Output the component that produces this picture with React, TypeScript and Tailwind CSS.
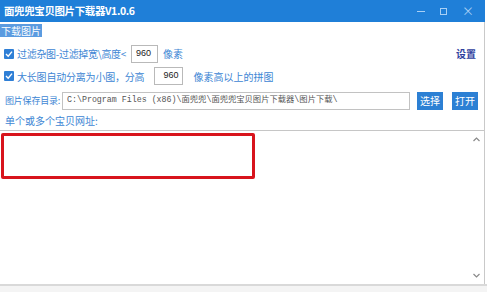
import React from 'react';

const cjk = "'Noto Sans CJK SC', 'Liberation Sans', sans-serif";

function Check() {
  return (
    <span className="w-[10px] h-[10px] bg-[#2f7fd6] rounded-[1px] flex items-center justify-center shrink-0">
      <svg width="8" height="8" viewBox="0 0 8 8">
        <path d="M1 4 L3.2 6.2 L7 1.6" stroke="#fff" strokeWidth="1.4" fill="none" />
      </svg>
    </span>
  );
}

function NumBox({ value, className }: { value: string; className: string }) {
  return (
    <div
      className={`h-[18px] border border-[#b9b9b9] bg-white flex items-center pl-[4px] text-[9px] text-[#222] ${className}`}
      style={{ fontFamily: "'Liberation Sans', sans-serif" }}
    >
      {value}
    </div>
  );
}

export default function App() {
  return (
    <div className="w-[487px] h-[292px] bg-white overflow-hidden flex flex-col" style={{ fontFamily: cjk }}>
      {/* Title bar */}
      <div className="h-[22px] w-[485px] bg-[#1f7fd8] flex items-center justify-between pl-[4px] pr-[11px] shrink-0">
        <span className="text-white text-[10.5px] font-bold leading-none tracking-[-0.4px]">面兜兜宝贝图片下载器V1.0.6</span>
        <div className="flex items-center gap-[15px] text-[#a9d0f5] text-[11px] leading-none">
          <span className="w-[8px] h-[1px] bg-[#a9d0f5]" />
          <span className="w-[7px] h-[7px] border border-[#a9d0f5]" />
          <span className="text-[12px]">×</span>
        </div>
      </div>

      <div className="flex-1 w-[485px] border-r border-[#c9c9c9] flex flex-col">
        {/* Tab */}
        <div className="mt-[2px] w-fit bg-[#5b9be0] text-white text-[10px] leading-[13px] px-[1px]">下载图片</div>

        {/* Row 1 */}
        <div className="flex items-center mt-[7px] pl-[4px] pr-[8px] h-[19px]">
          <Check />
          <span className="ml-[3px] text-[10px] text-[#3d86d4] tracking-[-0.3px]">过滤杂图-过滤掉宽\高度&lt;</span>
          <NumBox value="960" className="w-[27px] ml-[5px]" />
          <span className="ml-[5px] text-[10px] text-[#3d86d4]">像素</span>
          <span className="ml-auto text-[10px] text-[#2f3f9e] font-bold">设置</span>
        </div>

        {/* Row 2 */}
        <div className="flex items-center mt-[4px] pl-[4px] h-[18px]">
          <Check />
          <span className="ml-[3px] text-[10px] text-[#3d86d4] tracking-[-0.2px]">大长图自动分离为小图，分高</span>
          <NumBox value="960" className="w-[29px] ml-[10px] justify-center pl-0" />
          <span className="ml-[10px] text-[10px] text-[#3d86d4]">像素高以上的拼图</span>
        </div>

        {/* Row 3 */}
        <div className="flex items-center mt-[6px] pl-[5px] h-[19px]">
          <span className="text-[9px] text-[#3d86d4] w-[57px] whitespace-nowrap tracking-[-0.2px]">图片保存目录:</span>
          <div
            className="w-[348px] h-[18px] border border-[#c2c2c2] flex items-center pl-[4px] text-[8.3px] text-[#555] whitespace-nowrap overflow-hidden"
            style={{ fontFamily: "'Liberation Mono', 'Noto Sans CJK SC', monospace" }}
          >
            C:\Program Files (x86)\面兜兜\面兜兜宝贝图片下载器\图片下载\
          </div>
          <span className="ml-[7px] w-[26px] h-[18px] bg-[#2c80d4] text-white text-[10px] flex items-center justify-center">选择</span>
          <span className="ml-[9px] w-[26px] h-[18px] bg-[#2c80d4] text-white text-[10px] flex items-center justify-center">打开</span>
        </div>

        {/* Row 4 */}
        <div className="pl-[5px] mt-[1px] h-[18px] flex items-center">
          <span className="text-[10px] text-[#3d86d4]">单个或多个宝贝网址:</span>
        </div>

        {/* Textarea */}
        <div className="flex-1 mt-[1px] border-t border-[#c6c6c6] flex">
          <div className="flex-1 pt-[2px] pl-[1px]">
            <div className="w-[254px] h-[46px] border-[3px] border-[#d8141c] rounded-[2px]" />
          </div>
          <div className="w-[16px] flex flex-col justify-between items-center py-[6px]">
            <svg width="7" height="5" viewBox="0 0 7 5"><path d="M0.5 4 L3.5 1 L6.5 4" stroke="#8a8a8a" strokeWidth="1.2" fill="none" /></svg>
            <svg width="7" height="5" viewBox="0 0 7 5"><path d="M0.5 1 L3.5 4 L6.5 1" stroke="#8a8a8a" strokeWidth="1.2" fill="none" /></svg>
          </div>
        </div>
      </div>

      {/* Bottom edge */}
      <div className="h-[8px] w-[487px] border-t-2 border-[#d9d9d9] bg-[#f4f4f4] shrink-0" />
    </div>
  );
}
